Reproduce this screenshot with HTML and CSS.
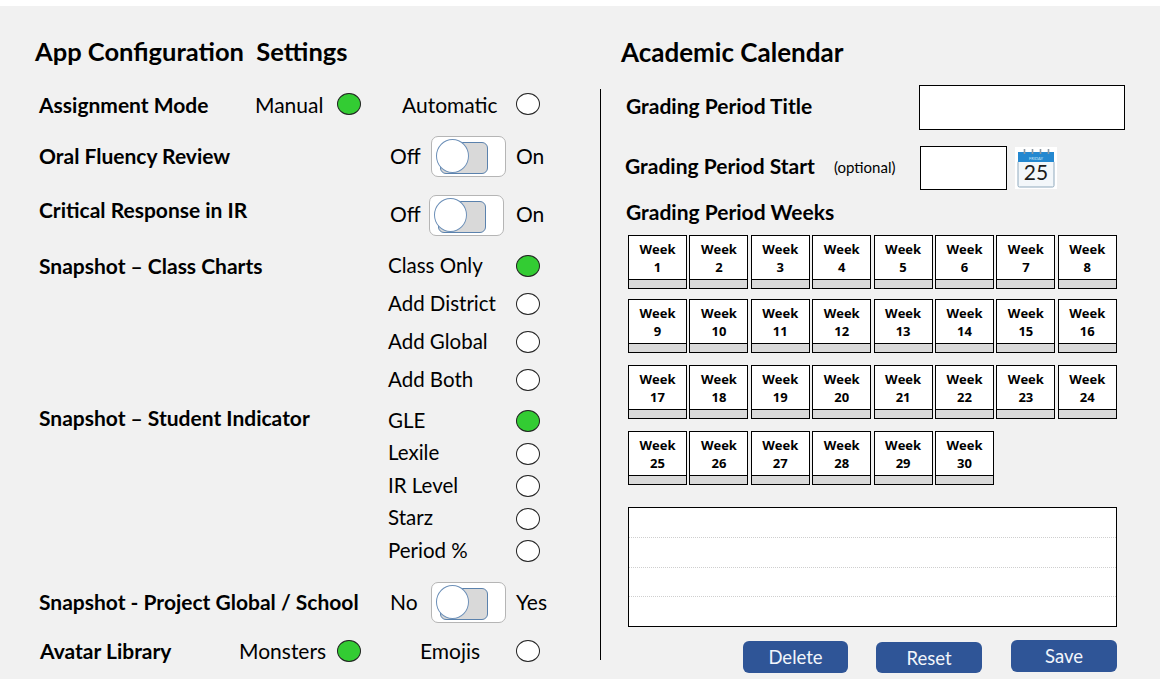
FILE: index.html
```html
<!DOCTYPE html>
<html lang="en">
<head>
    <meta charset="UTF-8">
    <meta name="viewport" content="width=device-width, initial-scale=1.0">
    <title>App Configuration Settings</title>
    <link rel="stylesheet" href="styles.css">
</head>
<body>
    <div class="screen">
        <section class="settings">
            <h1 class="settings-title">App Configuration&nbsp; Settings</h1>

            <div class="row row-mode">
                <span class="label label-mode">Assignment Mode</span>
                <span class="choice choice-manual">Manual</span>
                <span class="radio radio-on"></span>
                <span class="choice choice-auto">Automatic</span>
                <span class="radio"></span>
            </div>

            <div class="row row-oral">
                <span class="label label-toggle">Oral Fluency Review</span>
                <span class="toggle-off">Off</span>
                <span class="toggle"><span class="toggle-track"></span><span class="toggle-knob"></span></span>
                <span class="toggle-on">On</span>
            </div>

            <div class="row row-critical">
                <span class="label label-toggle">Critical Response in IR</span>
                <span class="toggle-off">Off</span>
                <span class="toggle toggle-left"><span class="toggle-track"></span><span class="toggle-knob"></span></span>
                <span class="toggle-on">On</span>
            </div>

            <div class="group group-charts">
                <span class="label group-label">Snapshot – Class Charts</span>
                <div class="options">
                    <div class="option"><span>Class Only</span><span class="radio radio-on"></span></div>
                    <div class="option"><span>Add District</span><span class="radio"></span></div>
                    <div class="option"><span>Add Global</span><span class="radio"></span></div>
                    <div class="option"><span>Add Both</span><span class="radio"></span></div>
                </div>
            </div>

            <div class="group group-student">
                <span class="label group-label">Snapshot – Student Indicator</span>
                <div class="options">
                    <div class="option"><span>GLE</span><span class="radio radio-on"></span></div>
                    <div class="option"><span>Lexile</span><span class="radio"></span></div>
                    <div class="option"><span>IR Level</span><span class="radio"></span></div>
                    <div class="option"><span>Starz</span><span class="radio"></span></div>
                    <div class="option"><span>Period %</span><span class="radio"></span></div>
                </div>
            </div>

            <div class="row row-project">
                <span class="label label-toggle">Snapshot - Project Global / School</span>
                <span class="toggle-off">No</span>
                <span class="toggle"><span class="toggle-track"></span><span class="toggle-knob"></span></span>
                <span class="toggle-on">Yes</span>
            </div>

            <div class="row row-avatar">
                <span class="label label-avatar">Avatar Library</span>
                <span class="choice choice-monsters">Monsters</span>
                <span class="radio radio-on"></span>
                <span class="choice choice-emojis">Emojis</span>
                <span class="radio"></span>
            </div>
        </section>

        <div class="divider"></div>

        <section class="calendar">
            <h1 class="calendar-title">Academic Calendar</h1>

            <div class="field field-title">
                <span class="label">Grading Period Title</span>
                <input class="input input-title" type="text">
            </div>

            <div class="field field-start">
                <span class="label">Grading Period Start</span>
                <span class="optional">(optional)</span>
                <input class="input input-start" type="text">
                <svg class="calendar-icon" viewBox="0 0 42 42" width="42" height="42">
                    <rect width="42" height="42" fill="#fff"/>
                    <rect x="3" y="14" width="36" height="26" rx="1.5" fill="#f3f7fa" stroke="#8fa9bd"/>
                    <rect x="3" y="5" width="36" height="10" fill="#2488d0"/>
                    <path d="M9.5 2v5M17.5 2v5M25.5 2v5M33.5 2v5" stroke="#8a97a3" stroke-width="1.6"/>
                    <text class="icon-day" x="21" y="12.5" text-anchor="middle">FRIDAY</text>
                    <text class="icon-date" x="21" y="33" text-anchor="middle">25</text>
                </svg>
            </div>

            <h2 class="weeks-title label">Grading Period Weeks</h2>

            <div class="weeks" id="weeks"></div>

            <div class="notes">
                <div class="notes-line"></div>
                <div class="notes-line"></div>
                <div class="notes-line"></div>
                <div class="notes-line"></div>
            </div>

            <div class="buttons">
                <button class="btn btn-delete">Delete</button>
                <button class="btn btn-reset">Reset</button>
                <button class="btn btn-save">Save</button>
            </div>
        </section>
    </div>

    <script>
        const weeks = document.getElementById('weeks');
        for (let i = 1; i <= 30; i++) {
            const week = document.createElement('div');
            week.className = 'week';
            week.innerHTML = `<div class="week-name">Week<br>${i}</div><div class="week-bar"></div>`;
            weeks.appendChild(week);
        }
    </script>
</body>
</html>
```

FILE: styles.css
```css
* {
    box-sizing: border-box;
}
html, body {
    height: 100%;
}
body {
    margin: 0;
    padding-top: 6px;
    background-color: #fff;
    font-family: Lato, "Open Sans", sans-serif;
    color: #000;
    overflow: hidden;
}
.screen {
    display: flex;
    height: 673px;
    background-color: #f1f1f1;
}

/* left side */
.settings {
    width: 600px;
    padding-left: 39px;
}
.settings-title {
    margin: 29px 0 0 -4px;
    height: 49px;
    font-size: 25.5px;
    line-height: 32px;
    font-weight: 700;
}
.label {
    font-size: 21px;
    font-weight: 700;
    white-space: nowrap;
}
.row {
    display: flex;
    align-items: center;
    font-size: 21px;
}
.row-mode {
    height: 40px;
}
.label-mode {
    width: 216px;
}
.choice-manual {
    width: 82px;
}
.choice-auto {
    margin-left: 41px;
    width: 114px;
}
.row-oral {
    height: 41px;
    margin-top: 12px;
}
.row-critical {
    height: 41px;
    margin-top: 18px;
}
.label-toggle {
    width: 351px;
}
.row-oral .label-toggle {
    margin-bottom: 3px;
}
.row-critical .label-toggle {
    margin-bottom: 12px;
}
.row-project .label-toggle {
    margin-bottom: 2px;
}
.toggle-off, .toggle-on {
    margin-bottom: 2px;
}
.row-critical .toggle-off, .row-critical .toggle-on {
    margin-bottom: 4px;
}
.toggle-off {
    width: 41px;
}
.toggle-on {
    margin-left: 10px;
}
.toggle {
    position: relative;
    width: 75px;
    height: 41px;
    background-color: #fff;
    border: 1px solid #b5b5b5;
    border-radius: 7px;
}
.toggle-left {
    margin-left: -2px;
    margin-right: 2px;
}
.toggle-track {
    position: absolute;
    left: 8px;
    top: 5px;
    width: 48px;
    height: 32px;
    background-color: #d9d9d9;
    border: 1px solid #5b82ad;
    border-radius: 6px;
}
.toggle-knob {
    position: absolute;
    left: 4px;
    top: 2px;
    width: 33px;
    height: 34px;
    background-color: #fff;
    border: 1px solid #6d90b8;
    border-radius: 50%;
}
.radio {
    flex: none;
    width: 24px;
    height: 22px;
    background-color: #fff;
    border: 1px solid #222;
    border-radius: 50%;
}
.radio-on {
    background-color: #33cc33;
}
.group {
    display: flex;
}
.group-label {
    width: 349px;
}
.group-charts {
    margin-top: 11px;
}
.group-charts .group-label {
    line-height: 38px;
}
.group-student {
    margin-top: 6px;
}
.group-student .group-label {
    line-height: 26px;
}
.options {
    width: 152px;
    font-size: 20.5px;
}
.option {
    display: flex;
    justify-content: space-between;
    align-items: center;
}
.option span:first-child {
    margin-bottom: 3px;
}
.group-charts .option {
    height: 38px;
}
.group-student .option {
    height: 32.5px;
}
.row-project {
    margin-top: 14px;
    height: 41px;
}
.row-avatar {
    height: 40px;
    margin-top: 8px;
    padding-left: 1px;
}
.label-avatar {
    width: 199px;
}
.choice-monsters {
    width: 98px;
}
.choice-emojis {
    margin-left: 59px;
    width: 96px;
}

.divider {
    width: 1px;
    height: 571px;
    margin-top: 83px;
    background-color: #000;
}

/* right side */
.calendar {
    width: 559px;
    padding-left: 25px;
}
.calendar-title {
    margin: 30px 0 0 -5px;
    height: 49px;
    font-size: 26px;
    line-height: 32px;
    font-weight: 700;
}
.input {
    display: block;
    background-color: #fff;
    border: 1px solid #000;
    border-radius: 0;
    padding: 0;
}
.field {
    display: flex;
    align-items: center;
}
.field-title {
    height: 45px;
}
.field-title .label {
    width: 293px;
    margin-bottom: 5px;
}
.input-title {
    width: 206px;
    height: 45px;
}
.field-start {
    height: 44px;
    margin-top: 16px;
    margin-left: -1px;
}
.field-start .label {
    width: 209px;
    margin-bottom: 5px;
}
.optional {
    width: 86px;
    margin-bottom: 3px;
    font-size: 15px;
}
.input-start {
    width: 87px;
    height: 44px;
}
.calendar-icon {
    margin-left: 8px;
}
.icon-day {
    font-size: 4px;
    fill: #cfe8fa;
}
.icon-date {
    font-size: 21px;
    fill: #1c1c1c;
}
.weeks-title {
    margin: 11px 0 0;
    height: 34px;
    line-height: 22px;
}
.weeks {
    display: grid;
    grid-template-columns: repeat(8, 59px);
    grid-template-rows: 64px 66px 66px 55px;
    column-gap: 2.4px;
    margin-left: 2px;
}
.week {
    display: flex;
    flex-direction: column;
    height: 54px;
    background-color: #fff;
    border: 1px solid #000;
}
.week-name {
    flex: 1;
    padding-top: 4px;
    font-family: "Open Sans", sans-serif;
    font-size: 13px;
    font-weight: 700;
    line-height: 18px;
    text-align: center;
}
.week-bar {
    height: 9px;
    background-color: #d9d9d9;
    border-top: 1px solid #000;
}
.notes {
    display: flex;
    flex-direction: column;
    width: 489px;
    height: 120px;
    margin: 21px 0 0 2px;
    background-color: #fff;
    border: 1px solid #000;
}
.notes-line {
    flex: 1;
    border-bottom: 1px dotted #cfcfcf;
}
.notes-line:last-child {
    border-bottom: none;
}
.buttons {
    display: flex;
    align-items: flex-start;
    width: 491px;
    margin-top: 13px;
    padding-left: 117px;
}
.btn {
    padding: 0;
    border: none;
    border-radius: 6px;
    background-color: #2f5597;
    color: #f2f5fb;
    font-family: Lato, "Open Sans", sans-serif;
    font-size: 18.5px;
}
.btn-delete {
    width: 105px;
    height: 32px;
    margin-top: 1px;
}
.btn-reset {
    width: 106px;
    height: 31px;
    margin: 2px 0 0 28px;
}
.btn-save {
    width: 106px;
    height: 32px;
    margin-left: 29px;
}
```
